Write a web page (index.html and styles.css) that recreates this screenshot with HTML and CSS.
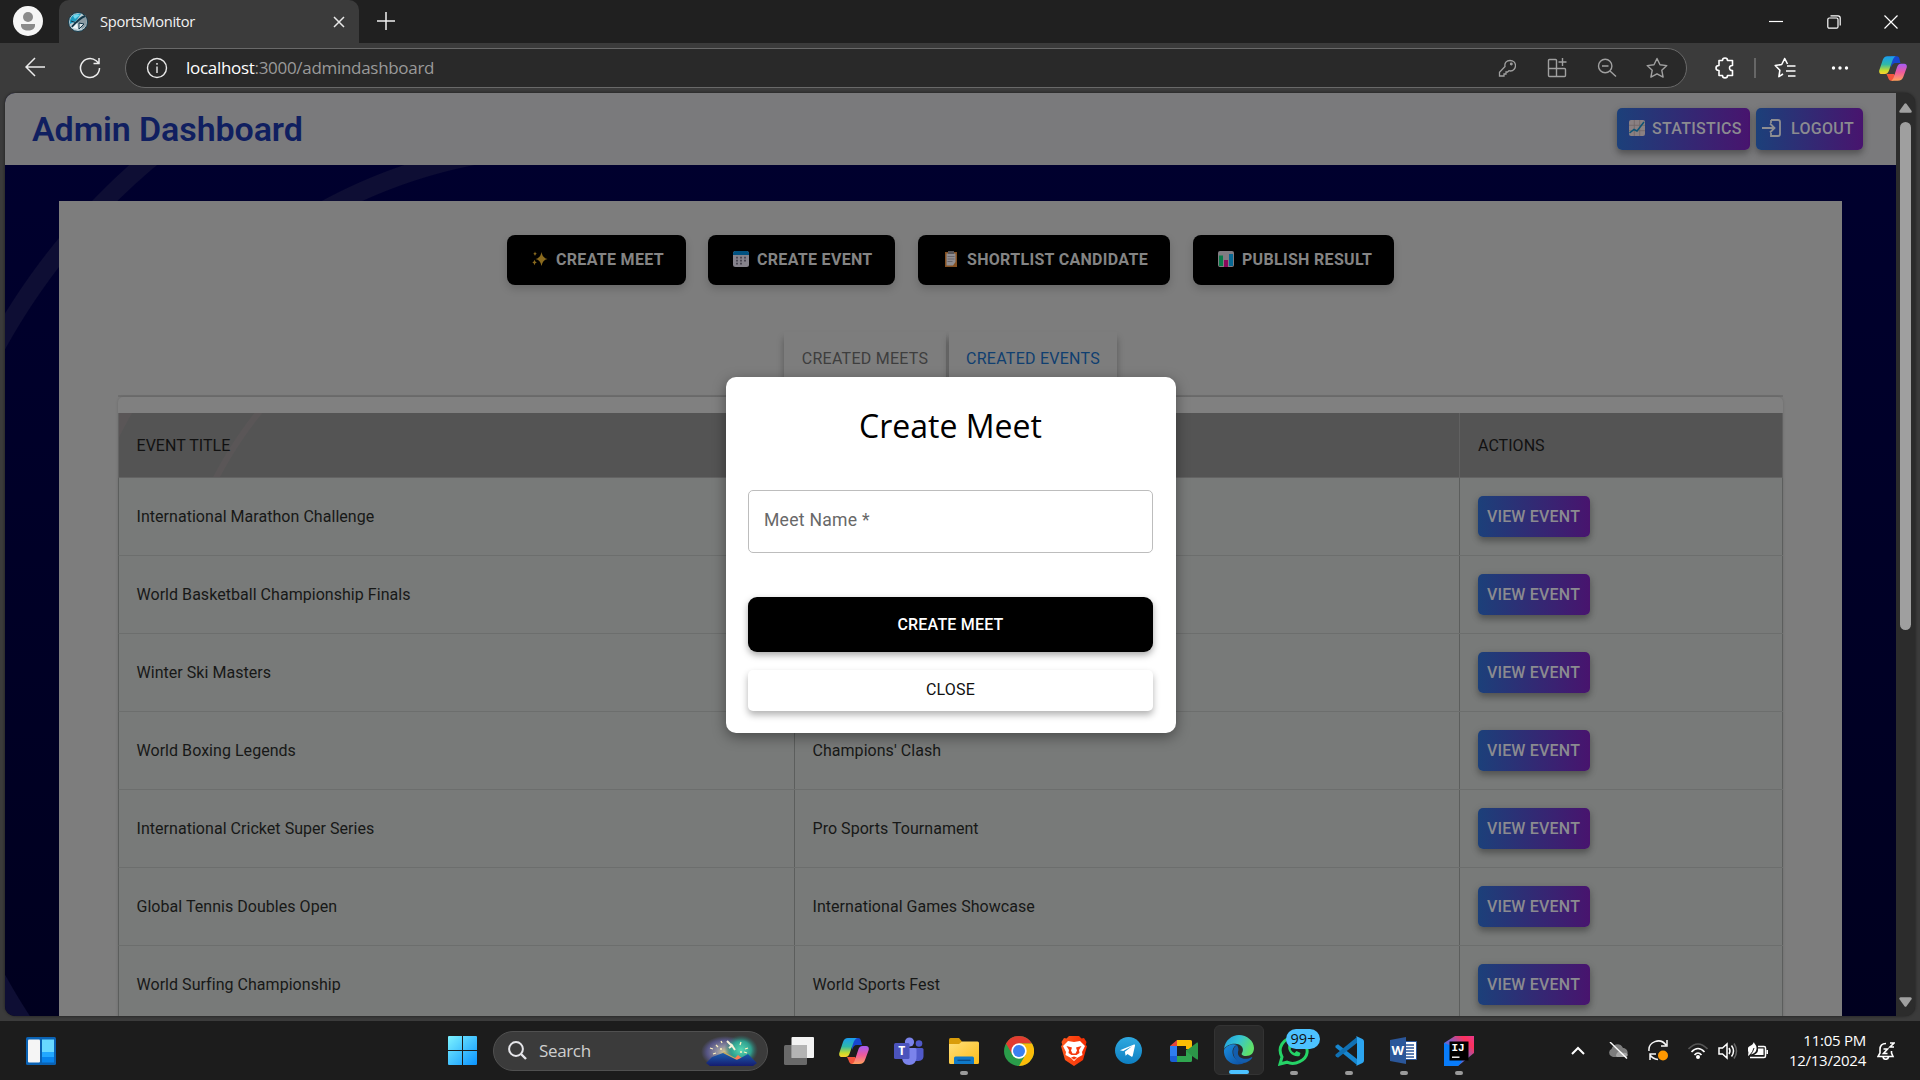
FILE: index.html
```html
<!DOCTYPE html>
<html lang="en">
<head>
<meta charset="utf-8">
<title>SportsMonitor</title>
<link rel="stylesheet" href="styles.css">
</head>
<body>
<svg class="defs" width="0" height="0" aria-hidden="true">
  <defs>
    <linearGradient id="cpA" x1="0" y1="0" x2="0" y2="1"><stop offset="0" stop-color="#1a9cf0"/><stop offset=".45" stop-color="#2fb8a8"/><stop offset=".8" stop-color="#c8dc2c"/><stop offset="1" stop-color="#ffd02f"/></linearGradient>
    <linearGradient id="cpB" x1="0" y1="0" x2="0" y2="1"><stop offset="0" stop-color="#a55cf5"/><stop offset=".5" stop-color="#ee5a9c"/><stop offset="1" stop-color="#ffa05c"/></linearGradient>
    <linearGradient id="win" x1="0" y1="0" x2="1" y2="1"><stop offset="0" stop-color="#7df3ff"/><stop offset="1" stop-color="#0a93ff"/></linearGradient>
    <linearGradient id="fold" x1="0" y1="0" x2="1" y2="1"><stop offset="0" stop-color="#ffdf7a"/><stop offset="1" stop-color="#fcbd1a"/></linearGradient>
    <linearGradient id="edgeTop" x1="0" y1="0" x2="1" y2=".4"><stop offset="0" stop-color="#1f9be0"/><stop offset=".5" stop-color="#35c3d4"/><stop offset="1" stop-color="#5fe06a"/></linearGradient>
    <linearGradient id="edgeLow" x1="0" y1="0" x2="1" y2="1"><stop offset="0" stop-color="#1a8fe0"/><stop offset="1" stop-color="#0d4a9c"/></linearGradient>
    <linearGradient id="tg" x1="0" y1="0" x2="0" y2="1"><stop offset="0" stop-color="#2fa9e0"/><stop offset="1" stop-color="#0e7fc2"/></linearGradient>
    <linearGradient id="brave" x1="0" y1="0" x2="1" y2="0"><stop offset="0" stop-color="#ff5a1f"/><stop offset="1" stop-color="#f52a00"/></linearGradient>
    <linearGradient id="ij" x1="0" y1="1" x2="1" y2="0"><stop offset="0" stop-color="#087cfa"/><stop offset=".5" stop-color="#7a63c8"/><stop offset=".8" stop-color="#fe315d"/><stop offset="1" stop-color="#e8388c"/></linearGradient>
    <radialGradient id="sky"><stop offset="0" stop-color="#d8c890"/><stop offset=".35" stop-color="#8f8fa0"/><stop offset=".75" stop-color="#565584"/><stop offset="1" stop-color="#3b3b3b"/></radialGradient>
    <radialGradient id="aurora"><stop offset="0" stop-color="#58d8b4"/><stop offset=".6" stop-color="#2fa08e"/><stop offset="1" stop-color="#2f6a68" stop-opacity="0"/></radialGradient>
    <linearGradient id="hill" x1="0" y1="0" x2="0" y2="1"><stop offset="0" stop-color="#1c5fae"/><stop offset="1" stop-color="#151c70"/></linearGradient>
    <symbol id="copilot" viewBox="0 0 30 28">
      <path d="M13 1h6c2 0 2.500 1 3 3l1 4h-5c-3 0-4 2-5 5z" fill="#1746d0"/>
      <path d="M8 20h8l2 3-3 4h-2c-2 0-3-2-3.500-4z" fill="#f2543c"/>
      <path d="M9 1h9c-2 1-3 3-3.700 5l-3.500 10c-.8 2.500-2 4-4.500 4H3C.8 20-.2 18.500.3 16L4 5c.9-2.500 2.500-4 5-4z" fill="url(#cpA)"/>
      <path d="M20 27h-7c2-1 2.500-3 3.200-5l3-9c.8-2.500 2-4 4.500-4H27c2.200 0 3.200 1.500 2.700 4L26 23c-.9 2.500-2.500 4-6 4z" fill="url(#cpB)"/>
    </symbol>
  </defs>
</svg>

<div class="browser">
  <div class="titlebar">
    <svg class="profile" width="30" height="30" viewBox="0 0 30 30"><circle cx="15" cy="15" r="15" fill="#f6f6f6"/><circle cx="15" cy="11" r="5" fill="#8b8b8b"/><path d="M8 18h14v1.500c0 3-3 5-7 5s-7-2-7-5z" fill="#8b8b8b"/></svg>
    <div class="tab">
      <svg width="20" height="20" viewBox="0 0 20 20"><circle cx="10" cy="10" r="9.500" fill="#b9cdd4" stroke="#123a4c"/><path d="M2 12C1 5 6 1 13 2L8 9z" fill="#1d9cc0"/><path d="M10 10l7-6c3 5 2 10-3 13z" fill="#8b9ba3"/><path d="M4 15C9 9 12 6 17 4" stroke="#12384a" stroke-width="2" fill="none"/><path d="M3 9l6 2M11 11l5 1-5 5z" stroke="#123648" fill="#dfe8ec"/><path d="M5 4c2-2 5-2 7-1L7 7z" fill="#6fd7ee"/><path d="M4 16l5-5 1 6z" fill="#eef6f8"/></svg>
      <span class="tab-title">SportsMonitor</span>
      <svg class="tab-close" width="12" height="12" viewBox="0 0 12 12" stroke="#e8e8e8" stroke-width="1.500"><path d="M1 1l10 10M11 1L1 11"/></svg>
    </div>
    <svg class="new-tab" width="18" height="18" viewBox="0 0 18 18" stroke="#f0f0f0" stroke-width="1.500"><path d="M9 0v18M0 9h18"/></svg>
    <div class="window-buttons">
      <svg width="14" height="14" viewBox="0 0 14 14" stroke="#fff" stroke-width="1.200"><path d="M0 6.500h14"/></svg>
      <svg width="14" height="14" viewBox="0 0 14 14" fill="none" stroke="#fff" stroke-width="1.200"><rect x=".8" y="3" width="10.200" height="10.200" rx="1.500"/><path d="M3.500.8h7.500q2.200 0 2.200 2.200v7.500"/></svg>
      <svg width="14" height="14" viewBox="0 0 14 14" stroke="#fff" stroke-width="1.200"><path d="M.5.5l13 13M13.500.5l-13 13"/></svg>
    </div>
  </div>

  <div class="toolbar">
    <svg class="nav-back" width="20" height="20" viewBox="0 0 20 20" fill="none" stroke="#ececec" stroke-width="1.500"><path d="M20 10H1M10 1l-9 9 9 9"/></svg>
    <svg class="nav-reload" width="22" height="22" viewBox="0 0 22 22" fill="none" stroke="#ececec" stroke-width="1.500"><path d="M20.500 11a9.500 9.500 0 1 1-3.300-7.200L19.500 6M20 1v5.500h-5.500"/></svg>
    <div class="omnibox">
      <svg width="22" height="22" viewBox="0 0 22 22" fill="none" stroke="#e8e8e8" stroke-width="1.400"><circle cx="11" cy="11" r="9.500"/><path d="M11 9.500v6.500M11 6v1.700"/></svg>
      <span class="url"><b>localhost</b>:3000/admindashboard</span>
      <div class="omnibox-icons">
        <svg width="18" height="18" viewBox="0 0 18 18" fill="none" stroke="#a0a0a0" stroke-width="1.300"><path d="M7 7.500C6.300 4 8.500 1.500 12 1.500s5.500 2.300 5.500 5-2 5.500-5 5.500l-1.500-.3L9.500 13H8v2H6v2H1.500v-3.700z"/><circle cx="13.300" cy="5" r=".8"/></svg>
        <svg width="20" height="20" viewBox="0 0 20 20" fill="none" stroke="#a0a0a0" stroke-width="1.400"><path d="M9.500 18.500V2.500q0-1-1-1h-6q-1 0-1 1v15q0 1 1 1h15q1 0 1-1v-6q0-1-1-1h-16M15.500 0v8M11.500 4h8"/></svg>
        <svg width="20" height="20" viewBox="0 0 20 20" fill="none" stroke="#a0a0a0" stroke-width="1.400"><circle cx="8.200" cy="8" r="6.700"/><path d="M13 13l6 5.500M5 8h6.500"/></svg>
        <svg width="22" height="22" viewBox="0 0 22 22" fill="none" stroke="#a0a0a0" stroke-width="1.400" stroke-linejoin="round"><path d="M11 1.500l3 6.200 6.800.9-5 4.700 1.300 6.800-6.100-3.300-6.100 3.300 1.300-6.800-5-4.700 6.800-.9z"/></svg>
      </div>
    </div>
    <div class="browser-actions">
      <svg class="a-puzzle" width="20" height="22" viewBox="0 0 20 22" fill="none" stroke="#fff" stroke-width="1.600" stroke-linejoin="round"><path d="M4 3.500h3.500c0-3.300 5-3.300 5 0h5v5c-4-.5-4 5.500 0 5v5h-5c0 3.200-5 3.200-5 0H4v-5c-4 0-4-5 0-5z"/></svg>
      <i class="divider"></i>
      <svg class="a-fav" width="22" height="22" viewBox="0 0 22 22" fill="none" stroke="#fff" stroke-width="1.600" stroke-linejoin="round"><path d="M13.500 7l-2.800-5.500-3 6-6.500 1 4.700 4.700-1 6.500L9 17M13 9h8.500M12 14h9.500M14 19h7.500"/></svg>
      <svg class="a-dots" width="18" height="6" viewBox="0 0 18 6" fill="#fff"><circle cx="2.500" cy="3" r="1.700"/><circle cx="9" cy="3" r="1.700"/><circle cx="15.500" cy="3" r="1.700"/></svg>
      <svg width="28" height="27"><use href="#copilot"/></svg>
    </div>
  </div>

  <div class="viewport">
    <main class="page">
      <header class="app-header">
        <h1>Admin Dashboard</h1>
        <button class="grad stats"><svg width="16" height="16" viewBox="0 0 16 16"><rect width="16" height="16" rx="2" fill="#8a8082"/><path d="M0 5.300h16M0 10.700h16M5.300 0v16M10.700 0v16" stroke="#716467" stroke-width=".8"/><path d="M.5 13L5 9.500l3 1.500 7-9" fill="none" stroke="#0c5377" stroke-width="1.500"/></svg>STATISTICS</button>
        <button class="grad logout"><svg width="19" height="18" viewBox="0 0 19 18" fill="none" stroke="#8e8e92" stroke-width="1.800"><path d="M0 9h12M8 4.500L12.500 9 8 13.500M9 1h7q2 0 2 2v12q0 2-2 2H9v-3M9 1v3"/></svg>LOGOUT</button>
      </header>
      <section class="panel">
        <div class="actions">
          <button class="black b1"><svg width="16" height="16" viewBox="0 0 16 16" fill="#8a6a1e"><path d="M9.500 1q1 6 6 7-5 1-6 7-1-6-6-7 5-1 6-7zM3 .5q.3 2 1.800 2.300Q3.300 3.200 3 5q-.4-1.800-1.700-2.200Q2.700 2.500 3 .5zM2.500 8.800q.4 2.300 2.300 2.700-1.900.4-2.300 2.700Q2 11.900.3 11.500 2.100 11.100 2.500 8.800z"/></svg>CREATE MEET</button>
          <button class="black b2"><svg width="16" height="16" viewBox="0 0 16 16"><rect width="16" height="16" rx="2.500" fill="#86838c"/><path d="M0 4V2.500Q0 0 2.500 0h11Q16 0 16 2.500V4z" fill="#005180"/><path d="M3 6.700h10.500M3 9.700h10.500M3 12.700h8" stroke="#4a4752" stroke-width="1.800" stroke-dasharray="2 2"/></svg>CREATE EVENT</button>
          <button class="black b3"><svg width="16" height="16" viewBox="0 0 16 16"><path d="M2 1h12v15H2z" fill="#855122"/><path d="M3.500 2.500h9V11L10 14.500H3.500z" fill="#908e92"/><path d="M5 0h6v3H5z" fill="#565458"/><path d="M4.500 5.500h7M4.500 8h7M4.500 10.500h5" stroke="#6a676d"/></svg>SHORTLIST CANDIDATE</button>
          <button class="black b4"><svg width="16" height="16" viewBox="0 0 16 16"><rect width="16" height="16" rx="2" fill="#817c82"/><path d="M1 4.500h4V15H1z" fill="#087a49"/><path d="M6 9h4v7H6z" fill="#8a075b"/><path d="M11 3h4v12h-4z" fill="#076894"/></svg>PUBLISH RESULT</button>
        </div>
        <div class="tabs"><span class="t1">CREATED MEETS</span><span class="t2">CREATED EVENTS</span></div>
        <div class="table-card">
          <div class="row head"><span>EVENT TITLE</span><span></span><span>ACTIONS</span></div>
          <div class="row"><span>International Marathon Challenge</span><span></span><span><button class="grad view">VIEW EVENT</button></span></div>
          <div class="row"><span>World Basketball Championship Finals</span><span></span><span><button class="grad view">VIEW EVENT</button></span></div>
          <div class="row"><span>Winter Ski Masters</span><span></span><span><button class="grad view">VIEW EVENT</button></span></div>
          <div class="row"><span>World Boxing Legends</span><span>Champions' Clash</span><span><button class="grad view">VIEW EVENT</button></span></div>
          <div class="row"><span>International Cricket Super Series</span><span>Pro Sports Tournament</span><span><button class="grad view">VIEW EVENT</button></span></div>
          <div class="row"><span>Global Tennis Doubles Open</span><span>International Games Showcase</span><span><button class="grad view">VIEW EVENT</button></span></div>
          <div class="row"><span>World Surfing Championship</span><span>World Sports Fest</span><span><button class="grad view">VIEW EVENT</button></span></div>
        </div>
      </section>
      <div class="modal">
        <h2>Create Meet</h2>
        <div class="field">Meet Name *</div>
        <button class="submit">CREATE MEET</button>
        <button class="close">CLOSE</button>
      </div>
    </main>
    <div class="scrollbar">
      <svg width="13" height="10" viewBox="0 0 13 10" fill="#a0a0a0"><path d="M5.500.8q1-1.200 2 0l5 7q.8 1.700-1 2H1.500q-1.800-.3-1-2z"/></svg>
      <i class="thumb"></i>
      <svg class="down" width="13" height="10" viewBox="0 0 13 10" fill="#a0a0a0"><path d="M5.500 9.200q1 1.200 2 0l5-7q.8-1.700-1-2H1.500q-1.800.3-1 2z"/></svg>
    </div>
  </div>
</div>

<footer class="taskbar">
  <svg class="widgets" width="30" height="28" viewBox="0 0 30 28"><rect width="30" height="28" rx="1.500" fill="#0a62b4"/><rect x="2" y="2.500" width="12" height="23" rx="1" fill="#f5f5f5"/><path d="M16 2.500h12V15H16z" fill="#68d8ff"/><path d="M16 15h12v5H16z" fill="#22a8ff"/><path d="M16 20h12v5.500H16z" fill="#0884ec"/></svg>
  <svg class="start" width="29" height="29" viewBox="0 0 29 29" fill="url(#win)"><path d="M0 1q0-1 1-1h13v14H0zM15 0h13q1 0 1 1v13H15zM0 15h14v14H1q-1 0-1-1zM15 15h14v13q0 1-1 1H15z"/></svg>
  <div class="search">
    <svg width="19" height="19" viewBox="0 0 19 19" fill="none" stroke="#e6e6ea" stroke-width="2"><circle cx="8" cy="8" r="6.900"/><path d="M13 13l5 5" stroke-width="2.400"/></svg>
    <span>Search</span>
    <svg width="57" height="31" viewBox="0 0 57 31"><ellipse cx="24" cy="17" rx="24" ry="16" fill="url(#sky)"/><ellipse cx="40" cy="15" rx="17" ry="15" fill="url(#aurora)"/><path d="M12 24l11-7 13 7-8 5z" fill="#c9a95a"/><path d="M32 25l5-5 5 4z" fill="#ff7d52"/><path d="M5 28l6-6 11-4 14 7 11-6 9 9-4 3H9z" fill="url(#hill)"/><path d="M26 6l4 4M30 9l4 6M28 13l4-3" stroke="#f5f0d8" stroke-width="2"/><path d="M9 13l3 1M15 10l2 2M20 6l1 2M12 19l3-1M39 10l1-3M44 14l3-1M43 17l3 1M19 14h2M39 17h2" stroke="#fff2c0" stroke-width="1.300"/></svg>
  </div>
  <div class="apps">
    <div class="app"><svg width="30" height="28" viewBox="0 0 30 28"><rect x="7.500" width="22.500" height="21" rx="1" fill="#f3f3f3"/><rect y="8" width="23" height="20" rx="1.500" fill="#777" opacity=".85"/><path d="M7.500 8H23v13H7.500z" fill="#b4b4b4"/></svg></div>
    <div class="app"><svg width="30" height="28"><use href="#copilot"/></svg></div>
    <div class="app"><svg width="30" height="28" viewBox="0 0 30 28"><circle cx="25" cy="6.500" r="3.300" fill="#5059c9"/><path d="M21 11h7q1.500 0 1.500 1.500V19c0 4-3 5.500-8.500 5z" fill="#5059c9"/><circle cx="15.500" cy="5" r="4.600" fill="#7b83eb"/><path d="M8 11h13q1.500 0 1.500 1.500V20c0 5-3 8-7.300 8S8 25 8 20z" fill="#7b83eb"/><rect y="6" width="15.500" height="16" rx="1.500" fill="#4b53bc"/><text x="7.700" y="18.200" text-anchor="middle" class="glyph" font-size="12">T</text></svg></div>
    <div class="app on"><svg width="30" height="28" viewBox="0 0 30 28"><path d="M0 8V2.500Q0 1 1.500 1H10l3 3.500V8z" fill="#d99c0a"/><path d="M0 7h10l3-2.500h15.500Q30 4.500 30 6v19.500q0 1.500-1.500 1.500h-27Q0 27 0 25.500z" fill="url(#fold)"/><path d="M5 27v-6q0-1.500 1.500-1.500h17Q25 19.500 25 21v6z" fill="#0f79c8"/><path d="M8.500 23.300h13" stroke="#0a4a86" stroke-width="1.300"/></svg></div>
    <div class="app"><svg width="30" height="30" viewBox="0 0 30 30"><circle cx="15" cy="15" r="15" fill="#2a9c4a"/><path d="M15 0a15 15 0 0 1 13 7.500H15L8.500 18.800 2 7.500A15 15 0 0 1 15 0z" fill="#e23c30"/><path d="M28 7.500A15 15 0 0 1 15 30l6.500-11.200L15 7.500z" fill="#fbbc0a"/><circle cx="15" cy="15" r="7.700" fill="#fff"/><circle cx="15" cy="15" r="6" fill="#3a80f2"/></svg></div>
    <div class="app"><svg width="26" height="30" viewBox="0 0 26 30"><path d="M8 0h10l2.500 2.500 2.500-.4 2.500 4-.8 3L26 10l-4 14-9 6-9-6L0 10l1.300-.9-.8-3 2.500-4 2.500.4z" fill="url(#brave)"/><path d="M7 5l6 1 6-1 5 5-3 6 .5 3-5.500 3-3 3-3-3-5.500-3L5 16l-3-6z" fill="#fff"/><path d="M5.500 10l5.500 1.500-1 3 1.500 3h3L16 14.500l-1-3 5.500-1.500-2.500 4 .5 3-3 2h-5l-3-2 .5-3z" fill="#f5380c"/><path d="M10 21.500l3-1 3 1-3 2.300z" fill="#f5380c"/><path d="M12 8h2v9h-2z" fill="#fff"/></svg></div>
    <div class="app"><svg width="27" height="27" viewBox="0 0 27 27"><circle cx="13.500" cy="13.500" r="13.500" fill="url(#tg)"/><path d="M5 13.200L19 7.600q1.300-.4 1 1.100L17.700 19q-.3 1.200-1.500.6L12.500 17l-1.900 1.800-.7-4.100 7.300-5.700-9 5z" fill="#fff"/></svg></div>
    <div class="app"><svg width="28" height="24" viewBox="0 0 28 24"><path d="M0 7l7-6v6z" fill="#e8443a"/><path d="M0 7h7v11H0z" fill="#2f7df0"/><path d="M0 17h7v6H2q-2 0-2-2z" fill="#1a5fd6"/><path d="M7 1h13.500Q22 1 22 2.500V11l-6-1V7H7z" fill="#fbbc04"/><path d="M7 17h9v-6l6-2v12.500q0 1.500-1.500 1.500H7z" fill="#30a650"/><path d="M16 12l11-8.500q1-.5 1 1v15q0 1.500-1 1L22 17z" fill="#2c9648"/></svg></div>
    <div class="app active"><svg width="30" height="30" viewBox="0 0 30 30"><path d="M0 14C1 5 8 0 15 0c8 0 15 6 15 13 0 5-3 8-8 8-4 0-5-2-4-3 2-3 1-8-5-9C7 8 2 11 0 14z" fill="url(#edgeTop)"/><path d="M0 15c2-4 8-7 13-5-4 1-6 7-3 12 3 4 8 6 12 5-9 6-23 1-22-12z" fill="url(#edgeLow)"/><path d="M13 10c-3 2-5 5-3 11s9 9 15 5c2-1 4-4 3-4-7 4-15 1-14-5 .5-2 1-3-1-7z" fill="#135dad"/></svg></div>
    <div class="app on"><svg width="31" height="30" viewBox="0 0 31 30" fill="none" stroke="#25d366" stroke-width="3"><path d="M2 28l2-7C-1 12 5 2 15.500 2S30 10 29 17 17 30 9 26.200z"/><path d="M10.500 9c-2 6 5 13 11 11l1-3-4-2-2 2c-2-1-3-2-4-4l1.500-2-1.500-3z" fill="#25d366" stroke="none"/></svg><span class="badge">99+</span></div>
    <div class="app on"><svg width="30" height="30" viewBox="0 0 30 30"><path d="M2 9.500l2-1.200L23 23v6L1.500 11.500q-.6-1 .5-2z" fill="#1787d0"/><path d="M2 20.500l2 1.200L23 7V1L1.500 18.500q-.6 1 .5 2z" fill="#1070b3"/><path d="M22 0l6.500 3q1.500.8 1.500 2.500v19q0 1.700-1.500 2.500L22 30q1-.5 1-3V3q0-2-1-3z" fill="#2ca5f0"/></svg></div>
    <div class="app on"><svg width="27" height="27" viewBox="0 0 27 27"><path d="M14 4.500h12.500v18H14z" fill="#fff" stroke="#2b579a"/><path d="M16 8h8M16 11h8M16 14h8M16 17h8M16 20h8" stroke="#2b579a" stroke-width="1.400"/><path d="M0 3l16-3v27L0 24z" fill="#2b579a"/><text x="7.800" y="18" text-anchor="middle" class="glyph" font-size="13">W</text></svg></div>
    <div class="app on"><svg width="30" height="30" viewBox="0 0 30 30"><path d="M11 0h19v17L14 30H0V7z" fill="url(#ij)"/><path d="M0 7l8 3 10 15-4 5H0z" fill="#087cfa"/><path d="M5.500 5.500h19v19h-19z" fill="#000"/><text x="7.500" y="15" class="glyph mono" font-size="11">IJ</text><path d="M8 21.200h7.500" stroke="#fff" stroke-width="1.400"/></svg></div>
  </div>
  <div class="tray">
    <svg width="14" height="9" viewBox="0 0 14 9" fill="none" stroke="#fff" stroke-width="2"><path d="M1 8l6-6 6 6"/></svg>
    <svg width="20" height="17" viewBox="0 0 20 17"><path d="M3 14a4 4 0 0 1 .5-7C5 2 12 0 15 6c5 0 6.500 7 2 9H5z" fill="#7d7d7d"/><path d="M8 14c0-4 4-6 7-3 5-1 6 3 3 4H9z" fill="#a6a6a6"/><path d="M2 0l17 16.500" stroke="#fff" stroke-width="1.400"/></svg>
    <svg width="20" height="21" viewBox="0 0 20 21" fill="none" stroke="#f5f5f5" stroke-width="1.500"><path d="M1 11C0 2 12-3 18 5M19 0v6h-6M2 20v-6h6M2 15c2 3 4 4 8 4.500"/><circle cx="15" cy="15.500" r="5" fill="#ff9800" stroke="none"/></svg>
    <svg width="20" height="16" viewBox="0 0 20 16" fill="none" stroke="#fff" stroke-width="1.700"><path d="M.5 6q9.500-10 19 0" stroke="#555"/><path d="M3.500 9q6.500-7 13 0M6.500 12q3.500-4 7 0"/><circle cx="10" cy="14" r="2" fill="#fff" stroke="none"/></svg>
    <svg width="20" height="18" viewBox="0 0 20 18" fill="none" stroke="#fff" stroke-width="1.500"><path d="M1 6h3.500L9 2v14l-4.500-4H1zM11 6q2 3 0 6M13.500 3.500q4 5.500 0 11"/><path d="M16 1.500q5 7.500 0 15" stroke="#666"/></svg>
    <svg width="20" height="17" viewBox="0 0 20 17" fill="none" stroke="#fff" stroke-width="1.500"><path d="M10 4.500h6q1.500 0 1.500 1.500v8q0 1.500-1.500 1.500H2M19.300 8v4"/><path d="M6 0c0 2 3 3 2.500 7S5 12 2 12.500L0 14c0-2 1-3 0-5s0-4 2-5 3-2 4-4z" fill="#fff" stroke="none"/><path d="M10 6.500h5.500V13H6q4.500-2 4-6.500z" fill="#fff" stroke="none"/><path d="M2 13q3-3 4-7" stroke="#1c1c1c" stroke-width="1"/></svg>
  </div>
  <div class="clock"><span>11:05 PM</span><span>12/13/2024</span></div>
  <svg class="bell" width="18" height="18" viewBox="0 0 18 18" fill="none" stroke="#fff" stroke-width="1.600"><path d="M9 1.500c-4 0-6 2.500-6 6V11l-2 3.500h15L14.500 11V9M6 15c.5 3 5 3 5.500 0M6.500 7h4l-4 4.500h4M13 1h4L13 5h4"/></svg>
</footer>
</body>
</html>
```
FILE: styles.css
```css
* { box-sizing: border-box; }
body { margin: 0; width: 1920px; height: 1080px; overflow: hidden; background: #3b3b3b; font-family: Roboto, sans-serif; }
button { border: 0; padding: 0; margin: 0; font: inherit; display: flex; align-items: center; }
svg { display: block; flex: none; }
.defs { position: absolute; }
h1, h2 { margin: 0; }

.browser { height: 1021px; display: flex; flex-direction: column; }
.titlebar { height: 43px; background: #202020; display: flex; align-items: center; }
.profile { margin: 0 16px 2px 13px; }
.tab { width: 300px; height: 43px; background: #3b3b3b; border-radius: 10px 10px 0 0; display: flex; align-items: center; padding: 0 14px 0 9px; }
.tab-title { flex: 1; margin: 0 0 2px 12px; color: #f2f2f2; font: 14.7px "Open Sans", sans-serif; letter-spacing: -0.3px; }
.new-tab { margin-left: 18px; margin-bottom: 2px; }
.window-buttons { margin-left: auto; display: grid; grid-template-columns: repeat(3, 57.500px); justify-items: center; }

.toolbar { height: 50px; display: flex; align-items: center; }
.nav-back { margin-left: 25px; margin-bottom: 2px; }
.nav-reload { margin-left: 34px; }
.omnibox { margin-left: 24px; width: 1562px; height: 40px; border: 1px solid #696969; border-radius: 20px; background: #292929; display: flex; align-items: center; padding: 0 4px 0 20px; }
.url { margin-left: 18px; margin-bottom: 2px; font: 17px "Open Sans", sans-serif; letter-spacing: -0.3px; color: #9a9a9a; }
.url b { font-weight: 400; color: #fff; }
.omnibox-icons { margin-left: auto; display: grid; grid-template-columns: repeat(4, 50px); place-items: center; }
.browser-actions { flex: 1; display: flex; align-items: center; padding-left: 28px; }
.divider { width: 2px; height: 20px; background: #666; margin: 0 18px 0 19px; }
.a-dots { margin: 0 30px 0 35px; }

.viewport { height: 923px; margin: 0 5px; display: flex; border-radius: 10px; overflow: hidden; background: #2c2c2c; box-shadow: 0 0 3px #1c1c1c; }
.page {
  position: relative; width: 1891px; height: 923px; overflow: hidden;
  background:
    radial-gradient(circle at 567px 569px, transparent 506px, #0e0e34 507px 524px, transparent 525px) 0 0 / 567px 200px no-repeat,
    radial-gradient(circle at 567px 569px, transparent 647px, #0e0e34 648px 665px, transparent 666px) 0 0 / 567px 923px no-repeat,
    linear-gradient(#00002f, #00001f);
}
.app-header { height: 72px; background: #7a7a7c; display: flex; align-items: center; padding: 0 33px 0 27px; }
.app-header h1 { flex: 1; font-size: 34px; font-weight: 600; color: #101f60; letter-spacing: -0.1px; }
.grad { border-radius: 5px; background: linear-gradient(90deg, #1c407a, #48146e); color: #8b8b90; font-weight: 500; font-size: 16px; box-shadow: 0 4px 6px rgba(0,0,0,.25), 0 2px 10px rgba(0,0,0,.12); }
.stats { width: 133px; height: 42px; padding: 0 0 2px 12px; gap: 7px; letter-spacing: .3px; }
.logout { width: 107px; height: 42px; margin-left: 6px; padding: 0 0 2px 6px; gap: 10px; letter-spacing: .3px; }

.panel { margin: 36px 54px 0; height: 830px; background: #7d7d7d; padding: 34px 59px 0; }
.actions { display: flex; justify-content: center; }
.black { height: 50px; border-radius: 8px; background: #000; color: #848484; font-weight: 700; font-size: 16px; letter-spacing: .31px; padding: 0 0 2px 25px; gap: 8px; box-shadow: 0 4px 8px rgba(0,0,0,.16); white-space: nowrap; }
.b1 { width: 179px; margin-right: 22px; }
.b2 { width: 187px; margin-right: 23px; }
.b3 { width: 252px; margin-right: 23px; }
.b4 { width: 201px; }

.tabs { height: 112px; padding: 47px 0 2px; display: flex; justify-content: center; border-bottom: 2px solid #6f6f6f; overflow: hidden; gap: 3px; }
.tabs span { height: 70px; line-height: 53px; font-size: 16px; letter-spacing: .25px; text-align: center; background: #7d7d7d; box-shadow: 0 6px 7px rgba(0,0,0,.3); }
.t1 { width: 162px; color: #3e3e3e; }
.t2 { width: 168px; color: #103f70; }

.table-card { background: #808080; border-radius: 5px 5px 0 0; padding-top: 16px; box-shadow: 0 0 3px rgba(0,0,0,.15); }
.row { height: 78px; display: grid; grid-template-columns: 676px 665px 324px; background: #787a79; border-bottom: 1px solid #6c6e6d; border-left: 1px solid #5c5e5d; color: #171817; font-size: 16px; letter-spacing: .04px; }
.row span { display: flex; align-items: center; padding-left: 17.500px; border-right: 1px solid #5c5e5d; }
.row span:last-child { width: 323px; padding-left: 18px; }
.head { height: 65px; border-color: #636363; color: #111; background: radial-gradient(circle at 454px 251px, transparent 399px, #5a5657 400px 405px, transparent 406px 507px, #5a5657 508px 525px, transparent 526px) 0 0 / 454px 65px no-repeat, #545454; }
.head span { border-color: #616161; }
.view { width: 112px; height: 41px; justify-content: center; letter-spacing: .2px; padding-right: 1px; }

.modal { position: absolute; left: 721px; top: 283.500px; width: 450px; height: 356px; background: #fff; border-radius: 10px; padding: 22px 23px 0 22px; box-shadow: 0 4px 14px rgba(0,0,0,.4); }
.modal h2 { height: 54px; text-align: center; font: 400 32px/54px "Open Sans", sans-serif; color: #000; letter-spacing: 0; }
.field { margin-top: 37px; height: 63px; border: 1px solid #bdbdbd; border-radius: 5px; padding-left: 15px; line-height: 59px; font-size: 17.600px; letter-spacing: .25px; color: #686868; }
.submit { margin-top: 44px; width: 100%; height: 55px; border-radius: 9px; background: #000; color: #fff; font-size: 16px; font-weight: 500; letter-spacing: .2px; justify-content: center; box-shadow: 0 3px 7px rgba(0,0,0,.35); }
.close { margin-top: 18px; width: 100%; height: 41px; border-radius: 5px; background: #fff; color: #111; font-size: 16px; padding-bottom: 1px; letter-spacing: .2px; justify-content: center; box-shadow: 0 4px 7px rgba(0,0,0,.3); }

.scrollbar { width: 19px; background: #2c2c2c; display: flex; flex-direction: column; align-items: center; padding: 10px 0 9px; }
.thumb { width: 11px; height: 508px; margin-top: 9px; border-radius: 6px; background: #9f9f9f; }
.down { margin-top: auto; }

.taskbar { height: 59px; background: #1c1c1c; display: flex; align-items: center; color: #fff; font-family: "Open Sans", sans-serif; }
.widgets { margin-left: 26px; }
.start { margin-left: 392px; }
.search { margin-left: 16px; width: 275px; height: 40px; border-radius: 20px; background: #3b3b3b; border: 1px solid #505050; display: flex; align-items: center; padding: 0 9px 0 14px; color: #cfcfcf; font-size: 17px; letter-spacing: -.35px; }
.search span { flex: 1; margin: 0 0 0 12px; line-height: 24px; }
.apps { display: flex; margin-left: 3px; height: 59px; }
.app { position: relative; width: 55px; display: flex; align-items: center; justify-content: center; }
.app.on::after, .app.active::after { content: ""; position: absolute; bottom: 5px; width: 8px; height: 4px; border-radius: 2px; background: #9a9a9a; }
.app.active::after { width: 20px; background: #4cc2ff; }
.app.active { width: 50px; height: 50px; margin: 4px 2.500px 0; background: #2a2a2a; border: 1px solid #333; border-radius: 6px; }
.app.active::after { bottom: 0; }
.badge { position: absolute; left: 20px; top: 8px; width: 34px; height: 20px; border-radius: 10px; background: #4cc2ff; color: #111; font-size: 14.500px; line-height: 20px; text-align: center; }
.glyph { fill: #fff; font-family: "Open Sans", sans-serif; font-weight: 700; }
.mono { font-family: "Liberation Mono", monospace; }
.tray { margin-left: auto; display: flex; align-items: center; gap: 20px; }
.tray svg:nth-child(1) { margin-right: 3px; }
.tray svg:nth-child(n+5) { margin-left: -10px; }
.clock { width: 98px; display: flex; flex-direction: column; align-items: flex-end; font-size: 15px; line-height: 20px; letter-spacing: -.25px; padding-bottom: 2px; }
.bell { margin: 0 25px 0 11px; }
```
